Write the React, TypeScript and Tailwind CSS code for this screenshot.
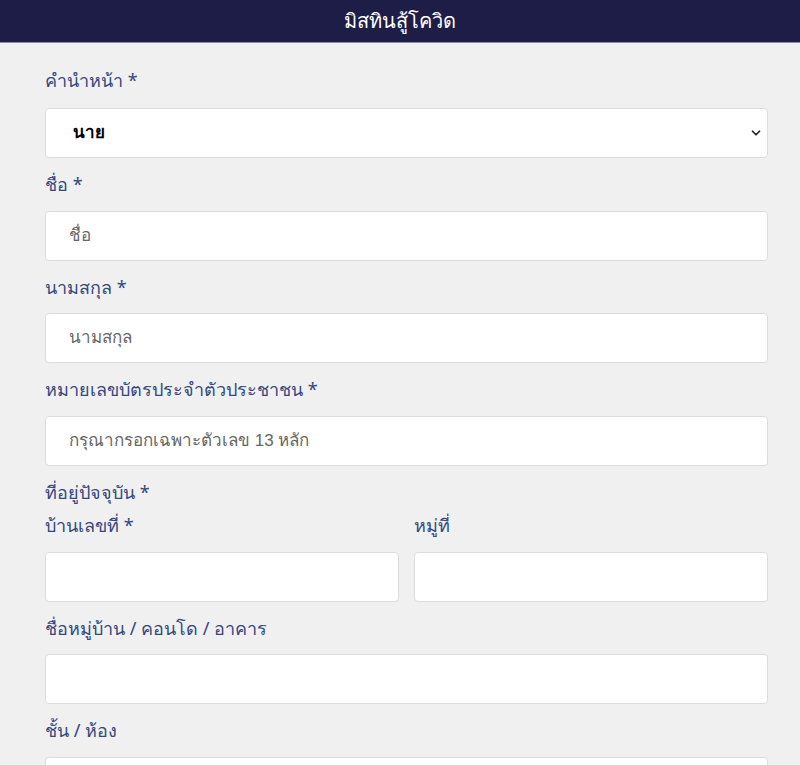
import { ChevronDown } from "lucide-react";

const labelCls =
  "block h-[28.5px] text-[18px] leading-[28.5px] text-[#34477f] font-['Noto_Sans','Liberation_Sans',sans-serif]";
const inputCls =
  "block w-full h-[50px] rounded-[4px] border border-[#dcdcdc] bg-white px-[23px] text-[17px] text-[#333] placeholder:text-[#666] outline-none font-['Liberation_Sans','Noto_Sans',sans-serif]";

interface FieldProps {
  label: string;
  placeholder?: string;
}

const Field = ({ label, placeholder }: FieldProps) => (
  <div className="mb-3">
    <label className={`${labelCls} mb-3`}>{label}</label>
    <input className={inputCls} placeholder={placeholder} />
  </div>
);

export default function App() {
  return (
    <div className="min-h-[765px] bg-[#f0f0f0]">
      {/* Header */}
      <div className="h-[43px] bg-[#1e1d47] border-b border-[#8a89a8] flex items-center justify-center">
        <span className="text-white text-[20px] font-['Noto_Sans','Liberation_Sans',sans-serif]">
          มิสทินสู้โควิด
        </span>
      </div>

      <div className="px-[45px] pt-[23px] pr-[32px]">
        {/* Title select */}
        <div className="mb-3">
          <label className={`${labelCls} mb-[13.5px]`}>คำนำหน้า *</label>
          <div className="relative">
            <select
              className={`${inputCls} appearance-none pl-[27px] font-bold text-black`}
              defaultValue="นาย"
            >
              <option>นาย</option>
              <option>นาง</option>
              <option>นางสาว</option>
            </select>
            <ChevronDown
              className="absolute right-[5px] top-1/2 -translate-y-1/2 w-[14px] h-[14px] text-[#222] pointer-events-none"
              strokeWidth={3}
            />
          </div>
        </div>

        <Field label="ชื่อ *" placeholder="ชื่อ" />
        <Field label="นามสกุล *" placeholder="นามสกุล" />
        <Field label="หมายเลขบัตรประจำตัวประชาชน *" placeholder="กรุณากรอกเฉพาะตัวเลข 13 หลัก" />

        <div className={`${labelCls} mb-[5px]`}>ที่อยู่ปัจจุบัน *</div>
        <div className="grid grid-cols-2 gap-[15px]">
          <Field label="บ้านเลขที่ *" />
          <Field label="หมู่ที่" />
        </div>

        <Field label="ชื่อหมู่บ้าน / คอนโด / อาคาร" />
        <Field label="ชั้น / ห้อง" />
      </div>
    </div>
  );
}
